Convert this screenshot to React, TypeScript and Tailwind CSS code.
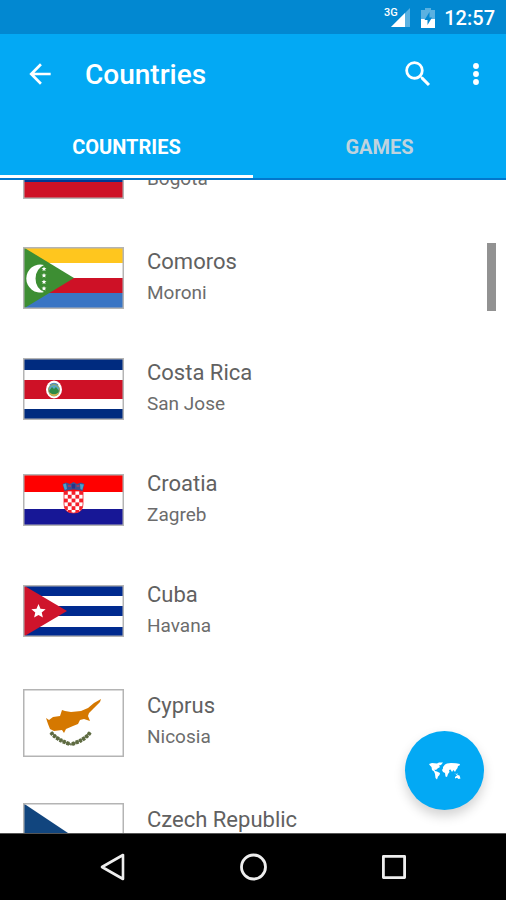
import type { ReactNode } from "react"

interface Country {
  name: string
  capital: string
  flag: ReactNode
}

function star(cx: number, cy: number, r: number) {
  return Array.from({ length: 10 }, (_, i) => {
    const radius = i % 2 ? r * 0.45 : r
    const angle = (Math.PI * i) / 5 - Math.PI / 2
    return `${cx + radius * Math.cos(angle)},${cy + radius * Math.sin(angle)}`
  }).join(" ")
}

interface FlagProps {
  height: number
  children: ReactNode
}

function Flag({ height, children }: FlagProps) {
  return (
    <svg width="101" height={height} viewBox={`0 0 101 ${height}`} className="block" aria-hidden="true">
      <rect width="101" height={height} fill="#fff" />
      {children}
      <rect x="0.75" y="0.75" width="99.5" height={height - 1.5} fill="none" stroke="#b4b4b4" strokeWidth="1.5" />
    </svg>
  )
}

const ColombiaFlag = (
  <Flag height={68}>
    <rect width="101" height="34" fill="#fcd116" />
    <rect y="34" width="101" height="17" fill="#003893" />
    <rect y="51" width="101" height="17" fill="#ce1126" />
  </Flag>
)

const ComorosFlag = (
  <Flag height={62}>
    <rect width="101" height="16" fill="#ffc61e" />
    <rect y="31" width="101" height="15" fill="#ce1126" />
    <rect y="46" width="101" height="16" fill="#3a75c4" />
    <path d="M0 0L51 31L0 62Z" fill="#3d8e33" />
    <path d="M21 18A14 14 0 1 0 21 45A15 15 0 0 1 21 18Z" fill="#fff" />
    <polygon points={star(21, 22, 2.6)} fill="#fff" />
    <polygon points={star(21, 28.5, 2.6)} fill="#fff" />
    <polygon points={star(21, 35, 2.6)} fill="#fff" />
    <polygon points={star(21, 41.5, 2.6)} fill="#fff" />
  </Flag>
)

const CostaRicaFlag = (
  <Flag height={62}>
    <rect width="101" height="12" fill="#002b7f" />
    <rect y="22" width="101" height="19" fill="#ce1126" />
    <rect y="51" width="101" height="11" fill="#002b7f" />
    <ellipse cx="31" cy="31.5" rx="8" ry="9" fill="#fff" />
    <ellipse cx="31" cy="32" rx="6" ry="6.5" fill="#8fa36b" />
    <path d="M26 30Q31 24 36 30L35 33H27Z" fill="#5ba7c9" />
    <path d="M26 33L29 29L31 31L33 29L36 33L34 36H28Z" fill="#2f8a45" />
    <path d="M27 35.5Q31 39 35 35.5" fill="none" stroke="#d9b347" strokeWidth="1.5" />
    <path d="M27 27Q31 23.5 35 27" fill="none" stroke="#4d84b8" strokeWidth="1.2" />
  </Flag>
)

const CroatiaFlag = (
  <Flag height={52}>
    <rect width="101" height="18" fill="#ff0000" />
    <rect y="35" width="101" height="17" fill="#171796" />
    <clipPath id="shield">
      <path d="M41 17H60V30Q60 39 50.500 39Q41 39 41 30Z" />
    </clipPath>
    <g clipPath="url(#shield)">
      <rect x="41" y="17" width="20" height="23" fill="#fff" />
      {Array.from({ length: 30 }, (_, i) => {
        const col = i % 5
        const row = Math.floor(i / 5)
        return (col + row) % 2 === 0 ? (
          <rect key={i} x={41 + col * 3.8} y={17 + row * 3.8} width="3.8" height="3.8" fill="#f4202a" />
        ) : null
      })}
    </g>
    <path d="M41 17H60V30Q60 39 50.500 39Q41 39 41 30Z" fill="none" stroke="#f4202a" strokeWidth="0.8" />
    <path d="M41.500 17L39.500 10L43 8.500L47 10L50.500 8L54 10L58 8.500L61.500 10L59.500 17Q50.500 14 41.500 17Z" fill="#3c4f8f" />
    <path d="M40 10.500L43 9.500L44 15L41.800 16Z" fill="#4aa3cc" />
    <path d="M48.800 10L52.200 10L52 14.500H49Z" fill="#26348a" />
    <path d="M57 10L60.800 10.500L59.300 16L57.500 15Z" fill="#4aa3cc" />
    <path d="M45 12H48M53.500 12H56.500" stroke="#b03a5a" strokeWidth="1.4" />
  </Flag>
)

const CubaFlag = (
  <Flag height={52}>
    <rect width="101" height="11" fill="#002a8f" />
    <rect y="21" width="101" height="10" fill="#002a8f" />
    <rect y="42" width="101" height="10" fill="#002a8f" />
    <path d="M0 0L44 26L0 52Z" fill="#cf142b" />
    <polygon points={star(15.5, 26.5, 7.5)} fill="#fff" />
  </Flag>
)

const CyprusFlag = (
  <Flag height={68}>
    <path
      d="M23 29L26 31L30 28L37 27L39 21L42 22L48 23L58 22L65 19L71 14L78 10L77 13L71 19L66 24L65 27L67 32L61 30L57 31L55 35L50 37L43 40L41 44L39 41L31 42L27 40L25 35Z"
      fill="#d57800"
    />
    <path d="M28 43Q34 51 48 55.500Q62 51 67 43" fill="none" stroke="#6f7a58" strokeWidth="2" />
    <path d="M28 43.500Q34 51 47 55M67 43.500Q62 51 49 55" fill="none" stroke="#5e6b41" strokeWidth="4" strokeDasharray="2.800 1" />
  </Flag>
)

const CzechFlag = (
  <Flag height={68}>
    <rect y="34" width="101" height="34" fill="#d7141a" />
    <path d="M0 0L51 34L0 68Z" fill="#11457e" />
  </Flag>
)

const countries: Country[] = [
  { name: "Colombia", capital: "Bogota", flag: ColombiaFlag },
  { name: "Comoros", capital: "Moroni", flag: ComorosFlag },
  { name: "Costa Rica", capital: "San Jose", flag: CostaRicaFlag },
  { name: "Croatia", capital: "Zagreb", flag: CroatiaFlag },
  { name: "Cuba", capital: "Havana", flag: CubaFlag },
  { name: "Cyprus", capital: "Nicosia", flag: CyprusFlag },
  { name: "Czech Republic", capital: "Prague", flag: CzechFlag },
]

function StatusBar() {
  return (
    <div className="flex h-[34px] shrink-0 items-center justify-end bg-[#0288d1] pt-px pr-[11px] text-white">
      <svg width="28" height="24" viewBox="0 0 28 24" aria-hidden="true">
        <text x="2" y="10" fontFamily="Roboto, sans-serif" fontSize="11" fontWeight="500" fill="#fff">3G</text>
        <path d="M28 2V21H9Z" fill="#fff" fillOpacity="0.35" />
        <path d="M23 7V21H9Z" fill="#fff" />
      </svg>
      <svg width="14" height="20" viewBox="0 0 14 20" className="mr-[9px] ml-[11px]" aria-hidden="true">
        <path d="M0 11V2H4V0H10V2H14V11Z" fill="#fff" fillOpacity="0.35" />
        <path d="M0 11H14V20H0Z" fill="#fff" />
        <path d="M8.500 4L3.500 12H6.500V17L11 9.500H8.500Z" fill="#0288d1" />
      </svg>
      <span className="text-[20px] leading-6 font-medium">12:57</span>
    </div>
  )
}

function Toolbar() {
  return (
    <div className="flex h-20 items-center pl-6 pr-[14px]">
      <button aria-label="Back" className="flex size-8 items-center justify-center">
        <svg width="32" height="32" viewBox="0 0 24 24" fill="#fff">
          <path d="M20 11H7.830l5.590-5.590L12 4l-8 8 8 8 1.410-1.410L7.830 13H20v-2z" />
        </svg>
      </button>
      <h1 className="ml-[29px] flex-1 pt-0.5 text-[28px] leading-8 font-medium">Countries</h1>
      <button aria-label="Search" className="flex size-9 items-center justify-center">
        <svg width="34" height="34" viewBox="0 0 24 24" fill="#fff">
          <path d="M15.500 14h-.79l-.28-.27A6.471 6.471 0 0 0 16 9.500 6.500 6.500 0 1 0 9.500 16c1.610 0 3.090-.59 4.230-1.570l.27.28v.79l5 4.990L20.490 19l-4.990-5zm-6 0C7.010 14 5 11.990 5 9.500S7.010 5 9.500 5 14 7.010 14 9.500 11.990 14 9.500 14z" />
        </svg>
      </button>
      <button aria-label="More options" className="ml-6 flex size-8 items-center justify-center">
        <svg width="34" height="34" viewBox="0 0 24 24" fill="#fff">
          <circle cx="12" cy="6" r="2.200" />
          <circle cx="12" cy="12" r="2.200" />
          <circle cx="12" cy="18" r="2.200" />
        </svg>
      </button>
    </div>
  )
}

function Tabs() {
  return (
    <div role="tablist" className="grid h-[66px] grid-cols-2 border-b-2 border-[#0277cc] text-[20px] leading-6 font-bold">
      <button role="tab" aria-selected="true" className="border-b-[3px] border-white pt-[5px]">
        COUNTRIES
      </button>
      <button role="tab" aria-selected="false" className="border-b-[3px] border-transparent pt-[5px] text-[#bfd3de]">
        GAMES
      </button>
    </div>
  )
}

function CountryRow({ name, capital, flag }: Country) {
  return (
    <li className="flex min-h-[111px] items-center gap-[23px] px-[23px] py-[23px]">
      {flag}
      <div className="self-start pt-px">
        <h2 className="text-[22px] leading-8 text-[#616161]">{name}</h2>
        <p className="text-[19px] leading-[30px] text-[#6c6c6c]">{capital}</p>
      </div>
    </li>
  )
}

function MapButton() {
  return (
    <button
      aria-label="Show map"
      className="absolute right-[22px] bottom-[23px] flex size-[79px] items-center justify-center rounded-full bg-[#03a9f4] shadow-[0_6px_12px_rgba(0,0,0,0.18)]"
    >
      <svg width="32" height="18" viewBox="0 0 32 18" fill="#fff">
        <path d="M0 2L3 1L8 1.500L10 .5L14 .5L12 3L10 3.500L11 5L8.500 6.500L7 8L5.500 7.500L6 9L8 9.500L11 11L10.500 13L9 14.500L8 17.500L6.500 16L6 12L5 9.500L3 8L2.500 5L1 3.500Z" />
        <path d="M14 5L16 2.500L18 1.500L22 1L27 1.200L31 2L30.500 3.500L29 4L28.500 6L27 8L26 10L24.500 8L23 10L21.500 7.500L20 8L20.500 10L19 12L18 15L16.500 14.500L16 11L14 10L13 8L14 6.500Z" />
        <path d="M25 11L27 12L29 11.500L28 13Z" />
        <path d="M26 15L28.500 13L30.500 13.500L31.500 16.500L29.500 17L28 15.800L26 16.500Z" />
      </svg>
    </button>
  )
}

function NavigationBar() {
  return (
    <nav className="flex h-[67px] shrink-0 justify-center border-t border-[#555] bg-black">
      <button aria-label="Back" className="flex w-[141px] items-center justify-center">
        <svg width="28" height="30" viewBox="0 0 28 30" fill="none" stroke="#eee" strokeWidth="2.600" strokeLinejoin="round">
          <path d="M25 3V27L4 15Z" />
        </svg>
      </button>
      <button aria-label="Home" className="flex w-[141px] items-center justify-center">
        <svg width="28" height="28" viewBox="0 0 28 28" fill="none" stroke="#eee" strokeWidth="2.800">
          <circle cx="14.5" cy="14" r="12" />
        </svg>
      </button>
      <button aria-label="Recent apps" className="flex w-[141px] items-center justify-center">
        <svg width="26" height="26" viewBox="0 0 26 26" fill="none" stroke="#eee" strokeWidth="2.800" strokeLinejoin="round">
          <rect x="2.400" y="2.400" width="21.200" height="21.200" />
        </svg>
      </button>
    </nav>
  )
}

export default function App() {
  return (
    <div className="flex h-screen flex-col bg-white font-[Roboto,sans-serif]">
      <StatusBar />
      <header className="shrink-0 bg-[#03a9f4] text-white">
        <Toolbar />
        <Tabs />
      </header>
      <main className="relative min-h-0 flex-1 overflow-hidden">
        <ul className="-mt-[72px]">
          {countries.map((country) => (
            <CountryRow key={country.name} {...country} />
          ))}
        </ul>
        <div className="absolute top-[63px] right-[10px] h-[68px] w-[9px] bg-[#929292]" />
        <MapButton />
      </main>
      <NavigationBar />
    </div>
  )
}
